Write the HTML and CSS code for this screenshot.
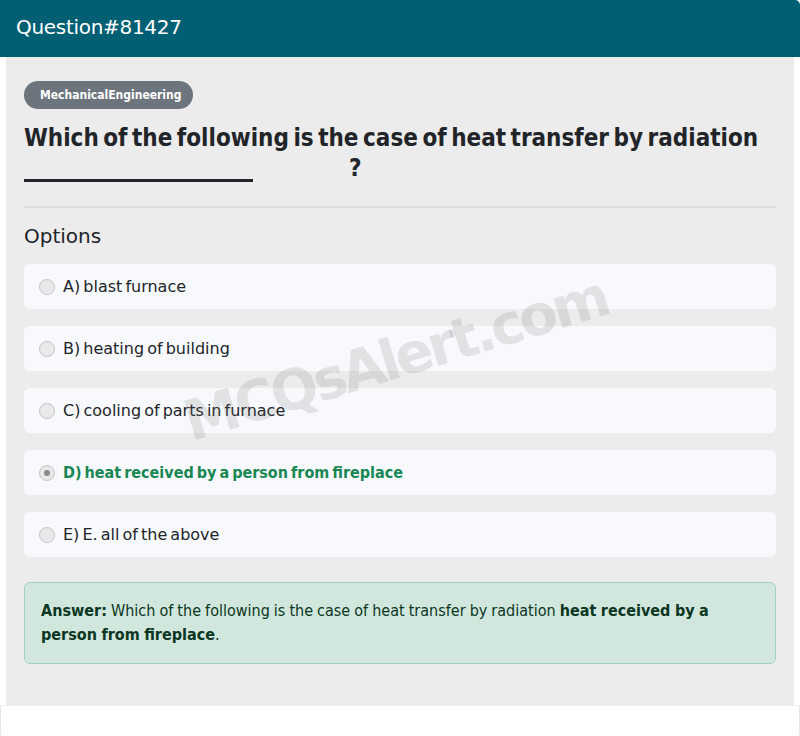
FILE: index.html
```html
<!DOCTYPE html>
<html>
<head>
<meta charset="utf-8">
<link rel="stylesheet" href="styles.css">
</head>
<body>
<div class="card">
  <div class="card-header">Question#81427</div>
  <div class="card-body">
    <span class="badge">MechanicalEngineering</span>
    <h1 class="question">Which of the following is the case of heat transfer by radiation <span class="blank"></span>?</h1>
    <hr class="divider">
    <h2 class="options-title">Options</h2>
    <div class="options">
      <div class="option"><span class="radio"></span><span class="opt-text">A) blast furnace</span></div>
      <div class="option"><span class="radio"></span><span class="opt-text">B) heating of building</span></div>
      <div class="option"><span class="radio"></span><span class="opt-text">C) cooling of parts in furnace</span></div>
      <div class="option correct"><span class="radio checked"></span><span class="opt-text">D) heat received by a person from fireplace</span></div>
      <div class="option"><span class="radio"></span><span class="opt-text">E) E. all of the above</span></div>
    </div>
    <div class="answer"><b>Answer:</b> Which of the following is the case of heat transfer by radiation <b>heat received by a person from fireplace</b>.</div>
    <div class="watermark">MCQsAlert.com</div>
  </div>
  <div class="card-footer"></div>
</div>
</body>
</html>
```
FILE: styles.css
```css
html, body { margin: 0; padding: 0; background: #fff; }
body { font-family: "DejaVu Sans", sans-serif; color: #212529; }
.card { width: 800px; }
.card-header {
  background: #015f74; color: #fff; height: 57px; box-sizing: border-box;
  padding: 15px 16px 0; font-size: 20px; border-top-right-radius: 5px;
  letter-spacing: -0.3px;
}
.card-body {
  position: relative; margin: 0 6px; background: #ececec;
  padding: 24px 18px 41px; overflow: hidden;
}
.badge {
  display: inline-block; background: #6c757d; color: #fff; font-size: 12px;
  font-weight: bold; padding: 6px 12px 6px 16px; border-radius: 14px; line-height: 16px;
  font-family: "DejaVu Sans Condensed", "DejaVu Sans", sans-serif;
}
.question {
  margin: 14px 0 0; font-family: "DejaVu Sans Condensed", "DejaVu Sans", sans-serif;
  font-size: 24px; font-weight: bold; line-height: 30px; word-spacing: -3px; color: #212529;
}
.blank { display: inline-block; width: 229px; border-bottom: 3px solid #212529; margin-right: 96px; height: 24px; vertical-align: -6px; }
.divider { border: 0; border-top: 2px solid #dcdcdc; margin: 23px 0 0; }
.options-title { font-weight: normal; font-size: 20px; margin: 16px 0 0; color: #212529; line-height: 24px; }
.options { display: flex; flex-direction: column; gap: 17px; margin-top: 16px; }
.option {
  background: #f8f9fc; border-radius: 6px; height: 45px; display: flex; align-items: center;
  padding-left: 15px; font-size: 16px; word-spacing: -2px;
}
.radio {
  width: 14px; height: 14px; border: 1px solid #c4c4c4; border-radius: 50%;
  background: #e9e9ec; margin-right: 8px; position: relative; box-sizing: content-box;
}
.radio.checked::after {
  content: ""; position: absolute; left: 4px; top: 4px; width: 6px; height: 6px;
  border-radius: 50%; background: #8a8a8a;
}
.option.correct .opt-text { color: #198754; font-weight: bold; font-family: "DejaVu Sans Condensed", "DejaVu Sans", sans-serif; }
.answer {
  margin-top: 25px; background: #d1e7dd; border: 1px solid #a3cfbb; border-radius: 6px;
  padding: 16px 16px; color: #0a3622; font-size: 16px; line-height: 24px;
  font-family: "DejaVu Sans Condensed", "DejaVu Sans", sans-serif; word-spacing: -0.5px;
}
.watermark {
  position: absolute; left: 188px; top: 337px; font-size: 56px; line-height: 56px; font-weight: bold;
  color: rgba(110,110,110,0.17); transform: rotate(-17deg); transform-origin: left bottom;
  pointer-events: none; font-family: "DejaVu Sans", sans-serif; letter-spacing: -3.5px; white-space: nowrap;
}
.card-footer { height: 31px; border: 1px solid #e4e4e4; border-top: 1px solid #f0f0f0; border-radius: 0 0 5px 5px; }
```
